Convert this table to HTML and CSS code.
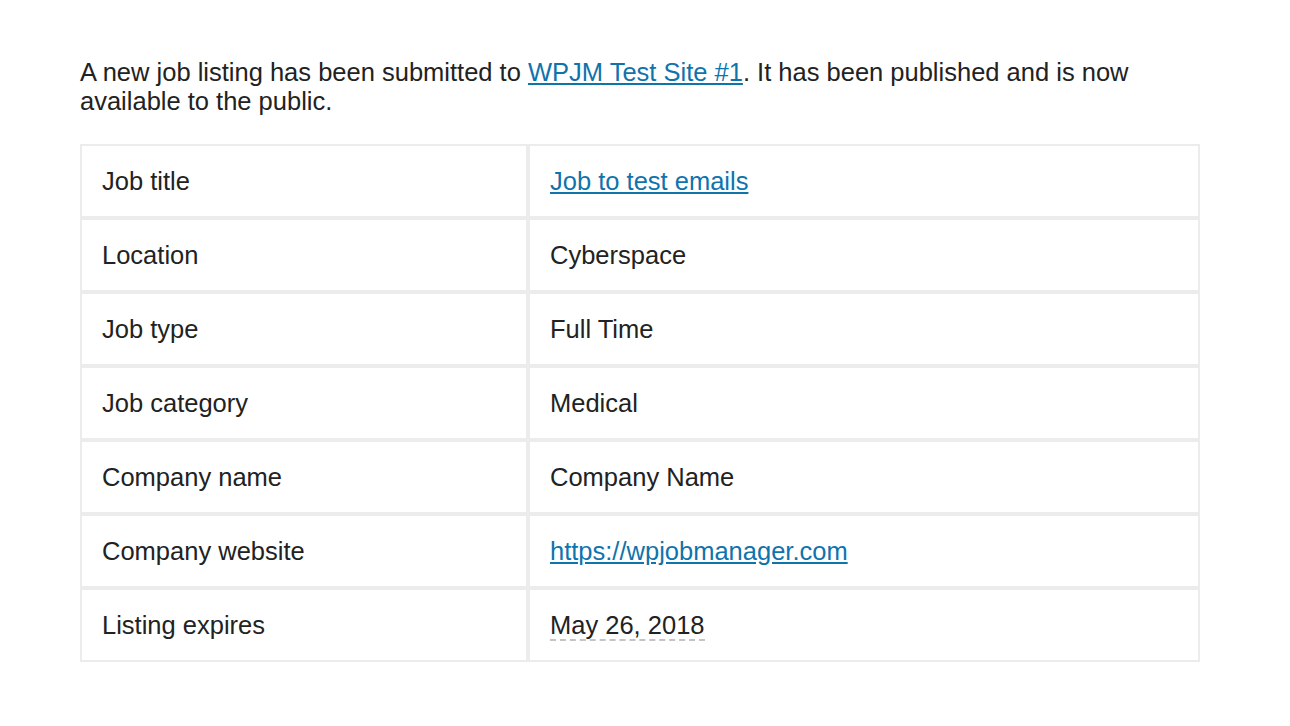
FILE: index.html
```html
<!DOCTYPE html>
<html>
<head>
<meta charset="utf-8">
<link rel="stylesheet" href="styles.css">
</head>
<body>
<div class="email">
  <p class="intro">A new job listing has been submitted to <a href="#">WPJM Test Site #1</a>. It has been published and is now available to the public.</p>
  <table class="details">
    <tr><td class="label">Job title</td><td class="value"><a href="#">Job to test emails</a></td></tr>
    <tr><td class="label">Location</td><td class="value">Cyberspace</td></tr>
    <tr><td class="label">Job type</td><td class="value">Full Time</td></tr>
    <tr><td class="label">Job category</td><td class="value">Medical</td></tr>
    <tr><td class="label">Company name</td><td class="value">Company Name</td></tr>
    <tr><td class="label">Company website</td><td class="value"><a href="#">https://wpjobmanager.com</a></td></tr>
    <tr><td class="label">Listing expires</td><td class="value"><span class="date">May 26, 2018</span></td></tr>
  </table>
</div>
</body>
</html>
```
FILE: styles.css
```css
html, body {
  margin: 0;
  padding: 0;
  background: #fff;
}
body {
  font-family: "Liberation Sans", Arial, sans-serif;
  color: #222;
  font-size: 25.5px;
}
.email {
  width: 1120px;
  padding: 58px 0 0 80px;
}
.intro {
  margin: 0 0 28px 0;
  line-height: 29px;
}
a {
  color: #0f73ac;
  text-decoration: underline;
}
.details {
  width: 1120px;
  border: 0;
  border-collapse: separate;
  border-spacing: 0;
}
.details td {
  border: 2px solid #ececec;
  height: 74px;
  padding: 0 20px;
  box-sizing: border-box;
  vertical-align: middle;
  line-height: 29px;
}
.details td.label {
  width: 448px;
}
.date {
  border-bottom: 2px dashed #c4c4c4;
}
```
